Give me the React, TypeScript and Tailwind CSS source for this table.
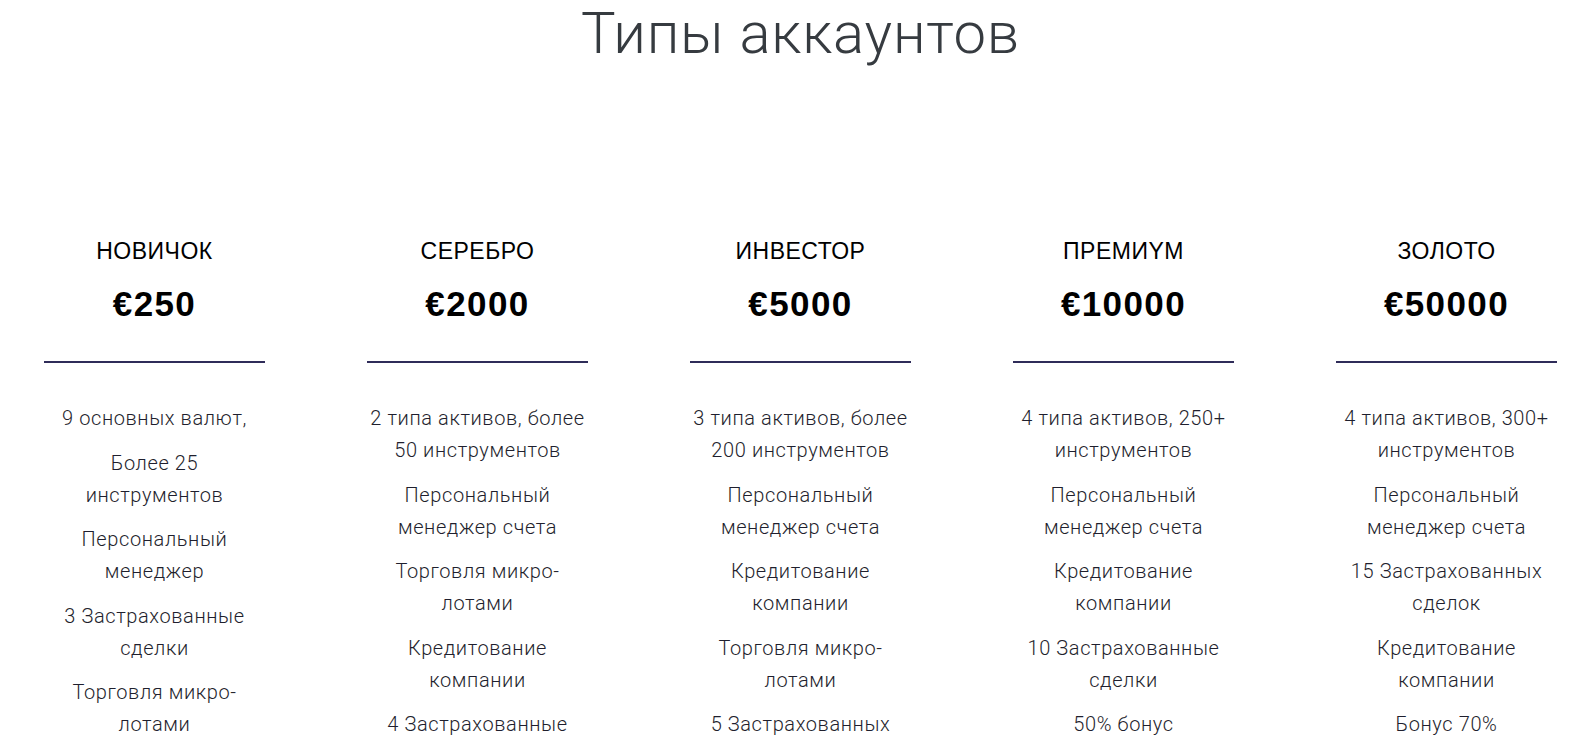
import React from 'react';

type Plan = {
  name: string;
  price: string;
  features: string[];
};

const plans: Plan[] = [
  {
    name: 'НОВИЧОК',
    price: '€250',
    features: [
      '9 основных валют,',
      'Более 25 инструментов',
      'Персональный менеджер',
      '3 Застрахованные сделки',
      'Торговля микро-лотами',
    ],
  },
  {
    name: 'СЕРЕБРО',
    price: '€2000',
    features: [
      '2 типа активов, более 50 инструментов',
      'Персональный менеджер счета',
      'Торговля микро-лотами',
      'Кредитование компании',
      '4 Застрахованные сделки',
    ],
  },
  {
    name: 'ИНВЕСТОР',
    price: '€5000',
    features: [
      '3 типа активов, более 200 инструментов',
      'Персональный менеджер счета',
      'Кредитование компании',
      'Торговля микро-лотами',
      '5 Застрахованных сделок',
    ],
  },
  {
    name: 'ПРЕМИYМ',
    price: '€10000',
    features: [
      '4 типа активов, 250+ инструментов',
      'Персональный менеджер счета',
      'Кредитование компании',
      '10 Застрахованные сделки',
      '50% бонус',
    ],
  },
  {
    name: 'ЗОЛОТО',
    price: '€50000',
    features: [
      '4 типа активов, 300+ инструментов',
      'Персональный менеджер счета',
      '15 Застрахованных сделок',
      'Кредитование компании',
      'Бонус 70%',
    ],
  },
];

function PlanColumn({ plan }: { plan: Plan }) {
  return (
    <div className="flex flex-col items-center text-center">
      <h3 className="font-['Liberation_Sans',Arial,sans-serif] text-[23px] leading-[26px] tracking-[0.5px] font-normal text-black">
        {plan.name}
      </h3>
      <p className="mt-[20px] font-['Liberation_Sans',Arial,sans-serif] text-[35px] leading-[40px] tracking-[1.4px] font-bold text-black">
        {plan.price}
      </p>
      <div className="mt-[37px] h-[2px] w-full bg-[#2f2c59]" />
      <ul className="mt-[39px] flex flex-col gap-[12.6px] font-['Roboto',sans-serif] text-[20px] leading-[32px] tracking-[0.6px] font-light text-[#1f1f2e]">
        {plan.features.map((f) => (
          <li key={f}>{f}</li>
        ))}
      </ul>
    </div>
  );
}

export default function App() {
  return (
    <div className="min-h-screen bg-white pl-[44px] pr-[31px]">
      <div className="w-[1513px]">
        <h1 className="pt-[4px] text-center font-['Roboto',sans-serif] text-[58px] leading-none tracking-[0.8px] font-light text-[#363b40]">
          Типы аккаунтов
        </h1>
        <div className="mt-[176px] grid grid-cols-5 gap-x-[102px]">
          {plans.map((p) => (
            <PlanColumn key={p.name} plan={p} />
          ))}
        </div>
      </div>
    </div>
  );
}
